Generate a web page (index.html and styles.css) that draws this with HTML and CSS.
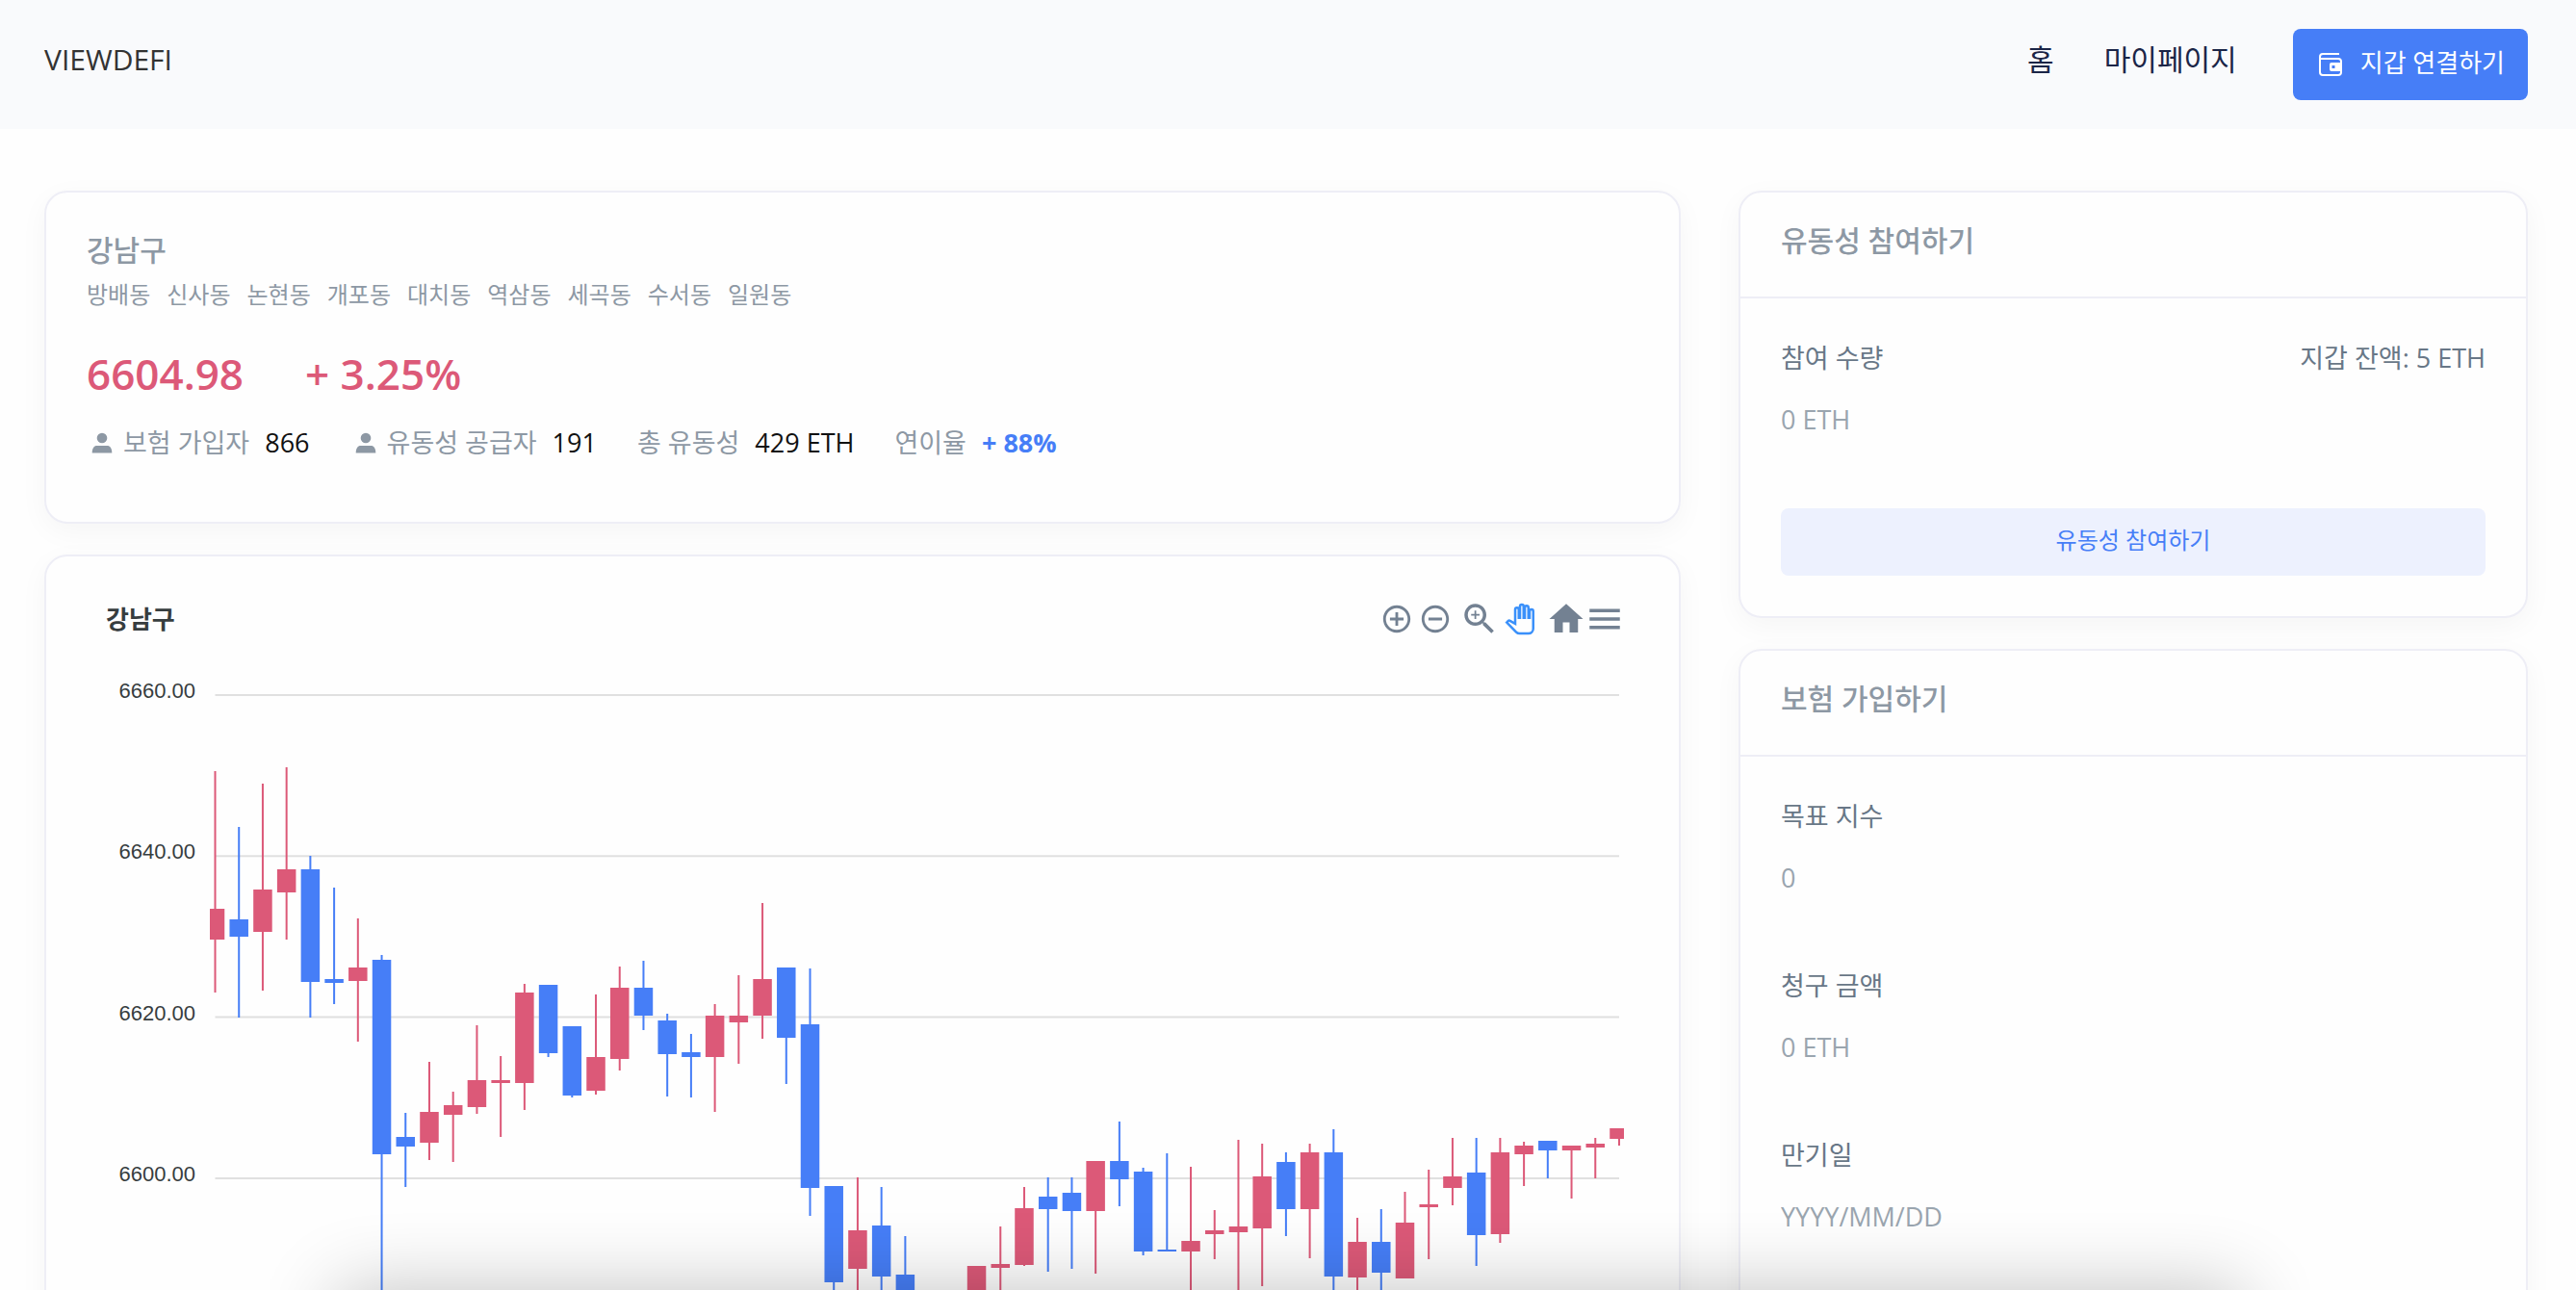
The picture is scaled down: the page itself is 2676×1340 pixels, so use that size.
FILE: index.html
```html
<!DOCTYPE html>
<html lang="ko">
<head>
<meta charset="utf-8">
<title>VIEWDEFI</title>
<link rel="stylesheet" href="styles.css">
</head>
<body>
<div class="app">
  <header class="topbar">
    <a class="brand" href="#">VIEWDEFI</a>
    <nav class="nav">
      <a href="#">홈</a>
      <a href="#">마이페이지</a>
      <button class="wallet" type="button">
        <svg class="wallet-icon" viewBox="0 0 26 26" aria-hidden="true">
          <path d="M22 2H5a3 3 0 0 0-3 3v16a3 3 0 0 0 3 3h16a3 3 0 0 0 3-3V10a3 3 0 0 0-3-3H2" fill="none" stroke="currentColor" stroke-width="2"/>
          <path d="M24 11H14a2 2 0 0 0-2 2v5a2 2 0 0 0 2 2h10zM14.500 14h3v3h-3z" fill="currentColor" fill-rule="evenodd"/>
        </svg>
        <span>지갑 연결하기</span>
      </button>
    </nav>
  </header>

  <main class="layout">
    <div class="column">
      <section class="card summary">
        <h1 class="heading">강남구</h1>
        <ul class="towns">
          <li>방배동</li><li>신사동</li><li>논현동</li><li>개포동</li><li>대치동</li><li>역삼동</li><li>세곡동</li><li>수서동</li><li>일원동</li>
        </ul>
        <p class="price"><strong>6604.98</strong><strong>+ 3.25%</strong></p>
        <dl class="stats">
          <div><dt><svg class="person" viewBox="0 0 24 24" aria-hidden="true"><circle cx="12" cy="7" r="5.300"/><path d="M1.700 22.500c0-5 2-7.500 5-7.500h10.600c3 0 5 2.500 5 7.500z"/></svg>보험 가입자</dt><dd>866</dd></div>
          <div><dt><svg class="person" viewBox="0 0 24 24" aria-hidden="true"><circle cx="12" cy="7" r="5.300"/><path d="M1.700 22.500c0-5 2-7.500 5-7.500h10.600c3 0 5 2.500 5 7.500z"/></svg>유동성 공급자</dt><dd>191</dd></div>
          <div><dt>총 유동성</dt><dd>429 ETH</dd></div>
          <div><dt>연이율</dt><dd class="up">+ 88%</dd></div>
        </dl>
      </section>

      <section class="card chart-card">
        <div class="chart-head">
          <h2 class="chart-title">강남구</h2>
          <div class="toolbar">
            <button type="button" aria-label="확대"><svg width="34" height="34" viewBox="0 0 24 24"><path d="M13 7h-2v4H7v2h4v4h2v-4h4v-2h-4V7zm-1-5C6.480 2 2 6.480 2 12s4.480 10 10 10 10-4.480 10-10S17.520 2 12 2zm0 18c-4.410 0-8-3.590-8-8s3.590-8 8-8 8 3.590 8 8-3.590 8-8 8z"/></svg></button>
            <button type="button" aria-label="축소"><svg width="34" height="34" viewBox="0 0 24 24"><path d="M7 11v2h10v-2H7zm5-9C6.480 2 2 6.480 2 12s4.480 10 10 10 10-4.480 10-10S17.520 2 12 2zm0 18c-4.410 0-8-3.590-8-8s3.590-8 8-8 8 3.590 8 8-3.590 8-8 8z"/></svg></button>
            <button class="zoom" type="button" aria-label="영역 확대"><svg width="42" height="42" viewBox="0 0 24 24"><path d="M15.500 14h-.79l-.28-.27C15.410 12.590 16 11.110 16 9.500 16 5.910 13.090 3 9.500 3S3 5.910 3 9.500 5.910 16 9.500 16c1.610 0 3.090-.59 4.230-1.570l.27.28v.79l5 4.990L20.490 19l-4.990-5zm-6 0C7.010 14 5 11.990 5 9.500S7.010 5 9.500 5 14 7.010 14 9.500 11.990 14 9.500 14z"/><path d="M12 10h-2v2H9v-2H7V9h2V7h1v2h2v1z"/></svg></button>
            <button class="pan" type="button" aria-label="이동"><svg width="30" height="30" viewBox="0 0 24 24"><path d="M23 5.500V20c0 2.200-1.800 4-4 4h-7.300c-1.080 0-2.100-.43-2.850-1.190L1 14.830s1.260-1.230 1.300-1.250c.22-.19.49-.29.79-.29.22 0 .42.06.6.16.04.01 4.310 2.460 4.310 2.460V4c0-.83.67-1.500 1.500-1.500S11 3.170 11 4v7h1V1.500c0-.83.67-1.500 1.500-1.500S15 .67 15 1.500V11h1V2.500c0-.83.67-1.500 1.500-1.500s1.500.67 1.500 1.500V11h1V5.500c0-.83.67-1.500 1.500-1.500s1.500.67 1.500 1.500z"/></svg></button>
            <button class="reset" type="button" aria-label="초기화"><svg width="42" height="42" viewBox="0 0 24 24"><path d="M10 20v-6h4v6h5v-8h3L12 3 2 12h3v8z"/></svg></button>
            <button type="button" aria-label="메뉴"><svg width="42" height="42" viewBox="0 0 24 24"><path d="M3 18h18v-2H3v2zm0-5h18v-2H3v2zm0-7v2h18V6H3z"/></svg></button>
          </div>
        </div>
        <svg class="chart" viewBox="0 0 1696 1000" role="img" aria-label="강남구 지수 차트">
          <g id="grid"></g>
          <g id="candles"></g>
        </svg>
      </section>
    </div>

    <aside class="column">
      <section class="card">
        <h2 class="heading card-head">유동성 참여하기</h2>
        <form class="form">
          <div class="field">
            <div class="field-row"><label for="amount">참여 수량</label><span>지갑 잔액: 5 ETH</span></div>
            <input id="amount" type="text" placeholder="0 ETH">
          </div>
          <button class="submit" type="button">유동성 참여하기</button>
        </form>
      </section>

      <section class="card">
        <h2 class="heading card-head">보험 가입하기</h2>
        <form class="form">
          <div class="field">
            <div class="field-row"><label for="target">목표 지수</label></div>
            <input id="target" type="text" placeholder="0">
          </div>
          <div class="field">
            <div class="field-row"><label for="claim">청구 금액</label></div>
            <input id="claim" type="text" placeholder="0 ETH">
          </div>
          <div class="field">
            <div class="field-row"><label for="expiry">만기일</label></div>
            <input id="expiry" type="text" placeholder="YYYY/MM/DD">
          </div>
        </form>
      </section>
    </aside>
  </main>
</div>
<div class="dock-shadow"></div>
<script src="chart.js"></script>
</body>
</html>
```
FILE: styles.css
```css
* { box-sizing: border-box; }

body {
  margin: 0;
  background: #fefefe;
  color: #212121;
  font-family: "Open Sans", "Noto Sans CJK KR", sans-serif;
  font-size: 27px;
}

h1, h2, p, ul, dl, dd { margin: 0; padding: 0; }
button, input { font: inherit; border: 0; }
a { color: inherit; text-decoration: none; }

.app { height: 100vh; overflow: hidden; }

.topbar {
  display: flex;
  justify-content: space-between;
  align-items: flex-start;
  padding: 30px 50px 30px 46px;
  background: #f9fafc;
  font-size: 30px;
  line-height: 64px;
}
.brand { color: #333; }
.nav { display: flex; gap: 52px; color: #1b2547; }
.nav a { height: 74px; }
.wallet {
  display: flex;
  align-items: center;
  gap: 18px;
  height: 74px;
  margin-left: 6px;
  padding: 0 24px 0 26px;
  border-radius: 8px;
  background: #467ef7;
  color: #fff;
  font-size: 26px;
  line-height: 40px;
}
.wallet span { padding-bottom: 4px; }
.wallet-icon { width: 26px; height: 26px; }

.layout {
  display: grid;
  grid-template-columns: minmax(0, 1700fr) minmax(0, 820fr);
  gap: 60px;
  padding: 64px 50px 64px 46px;
}
.column { display: flex; flex-direction: column; gap: 32px; }

.card {
  border: 2px solid #eeeef6;
  border-radius: 24px;
  background: #fefefe;
  box-shadow: 0 8px 30px rgba(0, 0, 0, .04);
}

.heading {
  color: #8d98a4;
  font-size: 30px;
  font-weight: 500;
  line-height: 40px;
}

.summary { padding: 40px 42px 62px; }
.towns {
  display: flex;
  gap: 17px;
  margin-top: 8px;
  color: #8d98a4;
  font-size: 24px;
  line-height: 36px;
  list-style: none;
}
.price {
  display: flex;
  gap: 64px;
  margin-top: 34px;
  color: #dc5978;
  font-size: 44px;
  line-height: 60px;
}
.price strong { font-weight: 600; }
.stats {
  display: flex;
  gap: 42px;
  margin-top: 22px;
  line-height: 40px;
}
.stats div { display: flex; gap: 16px; }
.stats dt { display: flex; align-items: center; color: #8d98a4; }
.stats dd { color: #111; }
.stats .up { color: #467ef7; font-weight: 700; }
.person { width: 24px; height: 24px; margin: 0 10px 0 4px; fill: #8d98a4; }

.chart-head {
  display: flex;
  justify-content: space-between;
  align-items: center;
  padding: 44px 57px 0 62px;
}
.chart-title { color: #373d3f; font-size: 26px; line-height: 42px; }
.toolbar { display: flex; }
.toolbar button {
  display: flex;
  align-items: center;
  justify-content: center;
  width: 40px;
  height: 42px;
  padding: 0;
  background: none;
}
.toolbar svg { flex: none; fill: #738192; overflow: visible; }
.toolbar .zoom { margin-left: 6px; }
.toolbar .pan { margin-left: 2px; }
.toolbar .pan svg { fill: #fefefe; stroke: #3a90fa; stroke-width: 2; }
.toolbar .reset { margin-left: 8px; }

.chart { display: block; width: 100%; }
.chart line { stroke: #e0e0e0; stroke-width: 2; }
.chart text {
  fill: #373d3f;
  font-family: "Liberation Sans", sans-serif;
  font-size: 22px;
  text-anchor: end;
}
.chart .rise { fill: #dc5978; }
.chart .fall { fill: #467ef7; }

.card-head {
  padding: 30px 42px 38px;
  border-bottom: 2px solid #eeeef6;
}
.form { padding: 42px; color: #687787; }
.field { height: 176px; line-height: 40px; }
.field-row { display: flex; justify-content: space-between; }
.field input {
  display: block;
  width: 100%;
  height: 40px;
  margin-top: 24px;
  padding: 0;
  background: none;
  color: #687787;
}
.field input::placeholder { color: #9aa5af; opacity: 1; }
.submit {
  display: block;
  width: 100%;
  height: 70px;
  padding: 0 0 8px;
  border-radius: 8px;
  background: #edf1fe;
  color: #467ef7;
  font-size: 24px;
}

.dock-shadow {
  position: fixed;
  top: 100%;
  left: 350px;
  right: 346px;
  height: 200px;
  box-shadow: 0 0 80px rgba(0, 0, 0, .24);
  pointer-events: none;
}
```
FILE: chart.js
```js
// Candles: [direction, high, body top, body bottom, low] in chart units.
const TOP = 664, LEFT = 48, STEP = 24.72, FIRST = 223.5, BODY = 19.5;
const candles = [
  ["r", 801, 944, 976, 1031], ["f", 859, 955, 973, 1057], ["r", 814, 924, 968, 1029],
  ["r", 797, 903, 927, 976], ["f", 889, 903, 1020, 1057], ["f", 922, 1017, 1021, 1043],
  ["r", 954, 1005, 1019, 1082], ["f", 992, 997, 1199, 1400], ["f", 1156, 1181, 1191, 1233],
  ["r", 1103, 1155, 1187, 1205], ["r", 1134, 1148, 1158, 1207], ["r", 1065, 1122, 1150, 1157],
  ["r", 1097, 1122, 1125, 1181], ["r", 1022, 1031, 1125, 1153], ["f", 1023, 1023, 1094, 1098],
  ["f", 1066, 1066, 1138, 1140], ["r", 1033, 1098, 1133, 1137], ["r", 1004, 1026, 1100, 1112],
  ["f", 998, 1026, 1055, 1070], ["f", 1053, 1060, 1095, 1139], ["f", 1074, 1093, 1098, 1140],
  ["r", 1043, 1055, 1098, 1155], ["r", 1013, 1055, 1062, 1105], ["r", 938, 1017, 1055, 1079],
  ["f", 1005, 1005, 1078, 1126], ["f", 1006, 1064, 1234, 1263], ["f", 1232, 1232, 1332, 1400],
  ["r", 1223, 1278, 1318, 1400], ["f", 1233, 1273, 1326, 1400], ["f", 1284, 1324, 1400, 1400],
  ["f", 1400, 1400, 1410, 1410], ["r", 1400, 1400, 1410, 1410], ["r", 1315, 1315, 1380, 1400],
  ["r", 1274, 1313, 1317, 1400], ["r", 1233, 1255, 1314, 1315], ["f", 1223, 1243, 1256, 1321],
  ["f", 1223, 1239, 1258, 1318], ["r", 1206, 1206, 1258, 1323], ["f", 1165, 1206, 1225, 1253],
  ["f", 1213, 1217, 1300, 1304], ["f", 1198, 1298, 1300, 1300], ["r", 1212, 1289, 1300, 1400],
  ["r", 1257, 1278, 1282, 1308], ["r", 1184, 1274, 1280, 1400], ["r", 1188, 1222, 1276, 1336],
  ["f", 1197, 1207, 1256, 1284], ["r", 1188, 1197, 1256, 1307], ["f", 1173, 1197, 1326, 1400],
  ["r", 1265, 1290, 1327, 1400], ["f", 1256, 1290, 1322, 1400], ["r", 1238, 1270, 1328, 1328],
  ["r", 1215, 1251, 1254, 1308], ["r", 1182, 1222, 1234, 1252], ["f", 1182, 1218, 1283, 1315],
  ["r", 1182, 1197, 1282, 1291], ["r", 1186, 1190, 1199, 1232], ["f", 1185, 1185, 1195, 1224],
  ["r", 1190, 1190, 1195, 1245], ["r", 1182, 1188, 1192, 1224], ["r", 1172, 1172, 1183, 1190]
];
const NS = "http://www.w3.org/2000/svg";
function add(parent, tag, attrs, text) {
  const el = document.createElementNS(NS, tag);
  for (const k in attrs) el.setAttribute(k, attrs[k]);
  if (text) el.textContent = text;
  parent.appendChild(el);
}
const grid = document.getElementById("grid");
["6660.00", "6640.00", "6620.00", "6600.00"].forEach((label, i) => {
  const y = 722 + i * 167.3 - TOP;
  add(grid, "line", { x1: FIRST - LEFT, x2: 1682 - LEFT, y1: y, y2: y });
  add(grid, "text", { x: 203 - LEFT, y: y + 3 }, label);
});
const group = document.getElementById("candles");
candles.forEach(([dir, high, top, bottom, low], i) => {
  const cls = dir === "r" ? "rise" : "fall";
  const x = FIRST + i * STEP;
  // The first and last bodies are cut at the edge of the plot area.
  const x1 = Math.max(x - BODY / 2, 218), x2 = Math.min(x + BODY / 2, 1687);
  add(group, "rect", { class: cls, x: x - 1 - LEFT, y: high - TOP, width: 2, height: Math.max(low - high, 0) });
  add(group, "rect", { class: cls, x: x1 - LEFT, y: top - TOP, width: x2 - x1, height: bottom - top });
});
```
